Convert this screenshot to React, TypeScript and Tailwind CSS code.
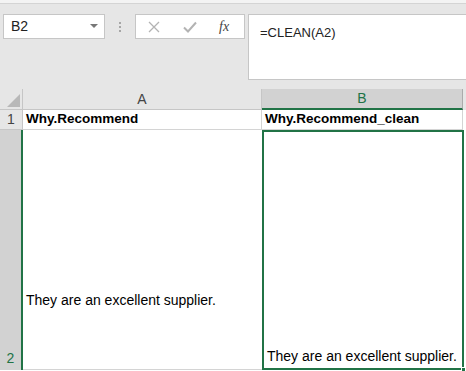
import React from 'react';

const font = { fontFamily: '"Liberation Sans", Arial, sans-serif' };

function Toolbar() {
    return (
        <div className="h-[85px] bg-[#e6e6e6] flex items-start pt-[10px] pl-[3px]">
            <div className="w-[102px] h-[25px] bg-white border border-[#c6c6c6] flex items-center justify-between pl-[7px] pr-[6px]">
                <span className="text-[14px] text-[#222]">B2</span>
                <svg width="8" height="5" viewBox="0 0 8 5"><path d="M0 0h8L4 4z" fill="#777" /></svg>
            </div>
            <div className="w-[30px] h-[25px] flex flex-col items-center justify-center gap-[2px]">
                <span className="w-[2px] h-[2px] bg-[#a6a6a6]" />
                <span className="w-[2px] h-[2px] bg-[#a6a6a6]" />
                <span className="w-[2px] h-[2px] bg-[#a6a6a6]" />
            </div>
            <div className="w-[110px] h-[25px] bg-white border border-[#c6c6c6] flex items-center pl-[12px]">
                <svg width="12" height="12" viewBox="0 0 12 12" className="mr-[23px]">
                    <path d="M1 1l10 10M11 1L1 11" stroke="#b3b3b3" strokeWidth="1.3" />
                </svg>
                <svg width="14" height="12" viewBox="0 0 14 12" className="mr-[22px]">
                    <path d="M1 6.5l4 4L13 1.5" stroke="#b3b3b3" strokeWidth="2" fill="none" />
                </svg>
                <span className="text-[14px] italic text-[#444]" style={{ fontFamily: '"Liberation Serif", serif' }}>fx</span>
            </div>
            <div className="ml-[3px] flex-1 h-[66px] bg-white border border-[#c6c6c6] border-r-0 pl-[11px] pt-[5px]">
                <span className="text-[13px] text-[#222]">=CLEAN(A2)</span>
            </div>
        </div>
    );
}

function Grid() {
    return (
        <div className="flex flex-col">
            <div className="flex h-[21px]">
                <div className="w-[23px] bg-[#e6e6e6] border-r border-b border-[#c6c6c6] flex items-end justify-end p-[2px]">
                    <svg width="13" height="13" viewBox="0 0 13 13"><path d="M13 0v13H0z" fill="#b8b8b8" /></svg>
                </div>
                <div className="w-[239px] bg-[#e6e6e6] border-r border-b border-[#c6c6c6] flex items-center justify-center text-[14px] text-[#444]">A</div>
                <div className="w-[201px] bg-[#d2d2d2] border-r border-[#ababab] border-b-2 border-b-[#217346] flex items-center justify-center text-[14px] text-[#217346]">B</div>
                <div className="flex-1 bg-[#e6e6e6]" />
            </div>
            <div className="flex h-[20px]">
                <div className="w-[23px] bg-[#e6e6e6] border-r border-b border-[#c6c6c6] flex items-center justify-center text-[14px] text-[#444]">1</div>
                <div className="w-[239px] bg-white border-r border-b border-[#d4d4d4] pl-[3px] flex items-center text-[13.5px] font-bold text-black">Why.Recommend</div>
                <div className="w-[201px] bg-white border-r border-b border-[#d4d4d4] pl-[3px] flex items-center text-[13.5px] font-bold text-black">Why.Recommend_clean</div>
                <div className="flex-1 bg-white" />
            </div>
            <div className="flex h-[240px]">
                <div className="w-[23px] bg-[#d2d2d2] border-r-2 border-[#217346] flex items-end justify-center pb-[1px] text-[14px] text-[#217346]">2</div>
                <div className="w-[239px] bg-white border-b border-[#d4d4d4] pl-[3px] flex items-end pb-[58px] text-[14px] text-black">They are an excellent supplier.</div>
                <div className="relative w-[202px] bg-white border-2 border-[#217346] pl-[3px] flex items-end pb-[1px] text-[14px] text-black">
                    They are an excellent supplier.
                    <span className="absolute -right-[4px] -bottom-[4px] w-[5px] h-[5px] bg-[#217346] border border-white" />
                </div>
                <div className="flex-1 bg-white" />
            </div>
        </div>
    );
}

export default function App() {
    return (
        <div className="w-[466px] h-[371px] overflow-hidden bg-white" style={font}>
            <div className="h-[4px] bg-[#f3f3f3] border-b border-[#d4d4d4]" />
            <Toolbar />
            <Grid />
        </div>
    );
}
